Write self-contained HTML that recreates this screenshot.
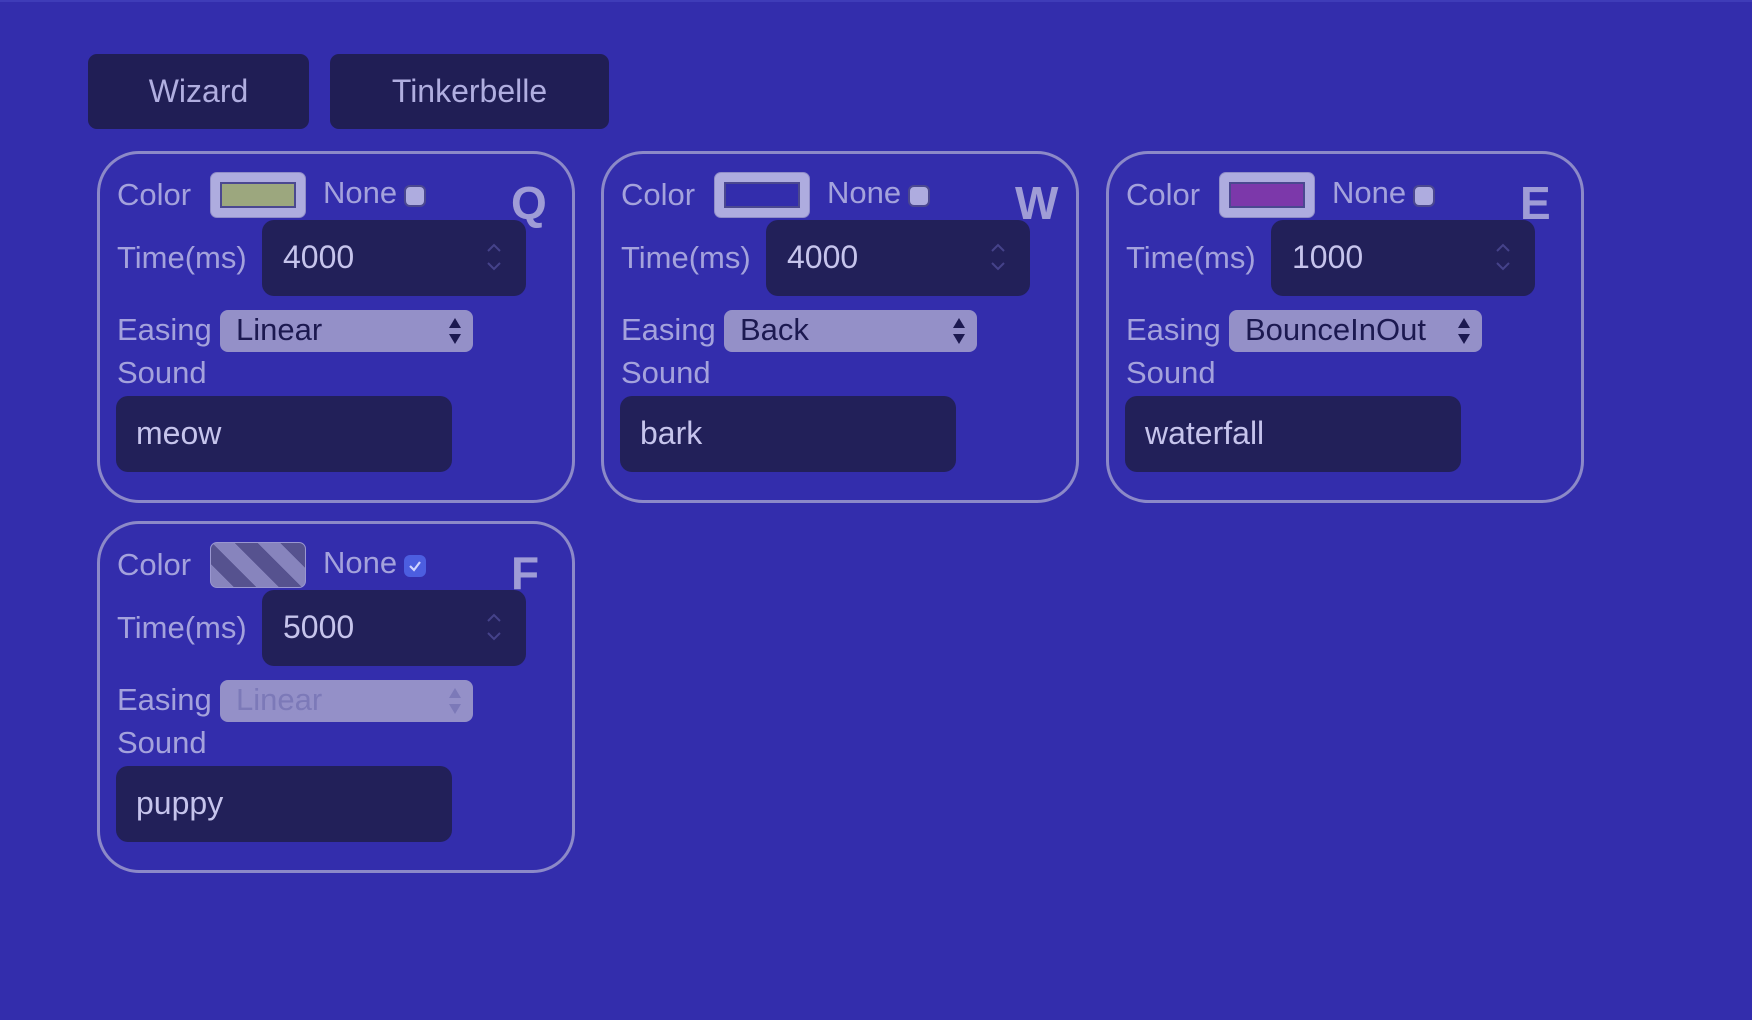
<!DOCTYPE html>
<html><head><meta charset="utf-8"><style>
*{box-sizing:border-box;margin:0;padding:0}
html,body{width:1752px;height:1020px;overflow:hidden}
body{background:#332dac;font-family:"Liberation Sans",sans-serif;color:#a4a2dc;position:relative}
.topline{position:absolute;left:0;top:0;width:1752px;height:2px;background:#3f3cb8}
.btn{position:absolute;top:54px;height:75px;background:#201e55;border-radius:9px;color:#b0aee0;font-size:32px;display:flex;align-items:center;justify-content:center}
.card{position:absolute;width:478px;height:352px;border:3px solid #8c89c8;border-radius:42px}
.card>*{position:absolute}
.lbl{font-size:31px;line-height:1;color:#a4a2dc}
.sw{left:110px;top:18px;width:96px;height:46px;background:#aeacdf;border:1px solid #8f8cc8;border-radius:7px}
.sw i{position:absolute;left:9px;top:9px;right:9px;bottom:9px;border:2px solid #4b4890}
.cb{left:304px;top:31px;width:22px;height:22px;background:#aeacdf;border:2px solid #4b4890;border-radius:6px}
.key{left:411px;top:22px;font-size:46px;font-weight:bold;color:#9f9cd6}
.num{left:162px;top:66px;width:264px;height:76px;background:#222059;border-radius:12px;font-size:32px;color:#c6c4ec;padding-left:21px;line-height:74px}
.num svg{position:absolute;right:24px;top:22px}
.sel{left:120px;top:156px;width:253px;height:42px;background:#9490c8;border-radius:8px;font-size:31px;color:#1c1950;padding-left:16px;line-height:40px}
.sel svg{position:absolute;right:10px;top:6px}
.snd{left:16px;top:242px;width:336px;height:76px;background:#222059;border-radius:12px;font-size:32px;color:#c6c4ec;padding-left:20px;line-height:74px}
</style></head><body>
<div class="topline"></div>
<div class="btn" style="left:88px;width:221px">Wizard</div>
<div class="btn" style="left:330px;width:279px">Tinkerbelle</div>

<div class="card" style="left:97px;top:151px">
 <div class="lbl" style="left:17px;top:25px">Color</div>
 <div class="sw"><i style="background:#9ca77e"></i></div>
 <div class="lbl" style="left:223px;top:23px">None</div>
 <div class="cb"></div>
 <div class="num">4000<svg width="16" height="30" viewBox="0 0 16 30"><path d="M2 9l6-6 6 6M2 21l6 6 6-6" stroke="#45428a" stroke-width="2" fill="none"/></svg></div>
 <div class="key">Q</div>
 <div class="lbl" style="left:17px;top:88px">Time(ms)</div>
 <div class="lbl" style="left:17px;top:160px">Easing</div>
 <div class="sel">Linear<svg width="16" height="30" viewBox="0 0 16 30"><path d="M8 2l6 10H2zM8 28l6-10H2z" fill="#1c1950"/></svg></div>
 <div class="lbl" style="left:17px;top:203px">Sound</div>
 <div class="snd">meow</div>
</div>

<div class="card" style="left:601px;top:151px">
 <div class="lbl" style="left:17px;top:25px">Color</div>
 <div class="sw"><i style="background:#332dac"></i></div>
 <div class="lbl" style="left:223px;top:23px">None</div>
 <div class="cb"></div>
 <div class="num">4000<svg width="16" height="30" viewBox="0 0 16 30"><path d="M2 9l6-6 6 6M2 21l6 6 6-6" stroke="#45428a" stroke-width="2" fill="none"/></svg></div>
 <div class="key">W</div>
 <div class="lbl" style="left:17px;top:88px">Time(ms)</div>
 <div class="lbl" style="left:17px;top:160px">Easing</div>
 <div class="sel">Back<svg width="16" height="30" viewBox="0 0 16 30"><path d="M8 2l6 10H2zM8 28l6-10H2z" fill="#1c1950"/></svg></div>
 <div class="lbl" style="left:17px;top:203px">Sound</div>
 <div class="snd">bark</div>
</div>

<div class="card" style="left:1106px;top:151px">
 <div class="lbl" style="left:17px;top:25px">Color</div>
 <div class="sw"><i style="background:#7c38aa"></i></div>
 <div class="lbl" style="left:223px;top:23px">None</div>
 <div class="cb"></div>
 <div class="num">1000<svg width="16" height="30" viewBox="0 0 16 30"><path d="M2 9l6-6 6 6M2 21l6 6 6-6" stroke="#45428a" stroke-width="2" fill="none"/></svg></div>
 <div class="key">E</div>
 <div class="lbl" style="left:17px;top:88px">Time(ms)</div>
 <div class="lbl" style="left:17px;top:160px">Easing</div>
 <div class="sel">BounceInOut<svg width="16" height="30" viewBox="0 0 16 30"><path d="M8 2l6 10H2zM8 28l6-10H2z" fill="#1c1950"/></svg></div>
 <div class="lbl" style="left:17px;top:203px">Sound</div>
 <div class="snd">waterfall</div>
</div>

<div class="card" style="left:97px;top:521px">
 <div class="lbl" style="left:17px;top:25px">Color</div>
 <div class="sw" style="background:repeating-linear-gradient(45deg,#8784bd 0 16px,#56528f 16px 32px);border-color:#9a97d0"></div>
 <div class="lbl" style="left:223px;top:23px">None</div>
 <div class="cb" style="background:#4c5ee0;border:none;border-radius:6px"><svg width="22" height="22" viewBox="0 0 22 22"><path d="M6 11l4 4 6-8" stroke="#cfd3ff" stroke-width="2.2" fill="none"/></svg></div>
 <div class="key">F</div>
 <div class="num">5000<svg width="16" height="30" viewBox="0 0 16 30"><path d="M2 9l6-6 6 6M2 21l6 6 6-6" stroke="#45428a" stroke-width="2" fill="none"/></svg></div>
 <div class="lbl" style="left:17px;top:88px">Time(ms)</div>
 <div class="lbl" style="left:17px;top:160px">Easing</div>
 <div class="sel" style="color:#7c79b8">Linear<svg width="16" height="30" viewBox="0 0 16 30"><path d="M8 2l6 10H2zM8 28l6-10H2z" fill="#7c79b8"/></svg></div>
 <div class="lbl" style="left:17px;top:203px">Sound</div>
 <div class="snd">puppy</div>
</div>
</body></html>
